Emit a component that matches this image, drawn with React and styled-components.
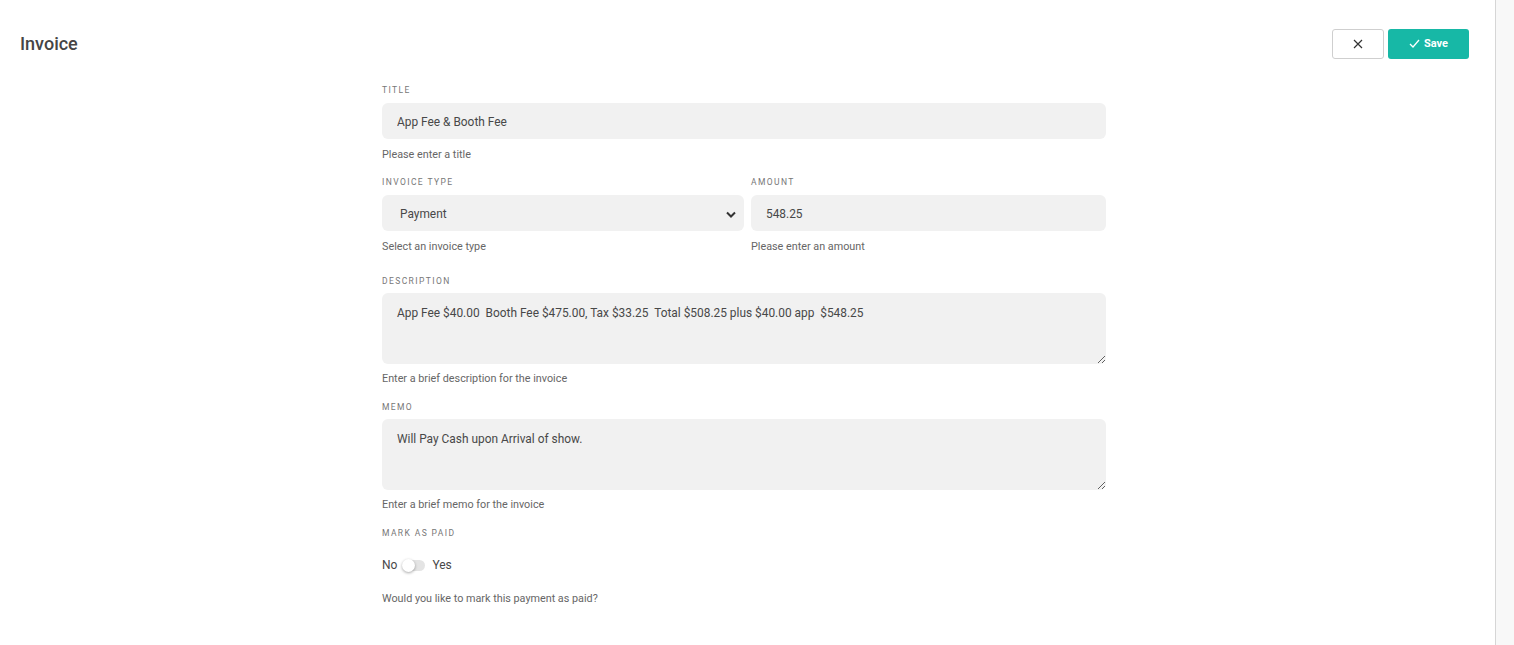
import React from "react";
import styled, { createGlobalStyle } from "styled-components";

const Global = createGlobalStyle`
  html, body {
    margin: 0;
    padding: 0;
    background: #fff;
    font-family: Roboto, "Liberation Sans", sans-serif;
  }
  * { box-sizing: border-box; }
`;

const Page = styled.div`
  display: flex;
  height: 645px;
  overflow: hidden;
`;

const Main = styled.main`
  flex: 1;
  padding: 29px 26px 0 20px;
`;

const Gutter = styled.aside`
  width: 19px;
  border-left: 1px solid #d6d6d6;
  background: #f8f8f8;
`;

const Header = styled.header`
  display: flex;
  align-items: center;
  justify-content: space-between;
`;

const Title = styled.h1`
  margin: -2px 0 0;
  font-size: 18px;
  font-weight: 500;
  color: #454545;
`;

const Actions = styled.div`
  display: flex;
  gap: 4px;
`;

const CloseButton = styled.button`
  width: 52px;
  height: 30px;
  display: flex;
  align-items: center;
  justify-content: center;
  background: #fff;
  border: 1px solid #cfcfcf;
  border-radius: 3px;
  padding: 0;
`;

const SaveButton = styled.button`
  width: 81px;
  height: 30px;
  display: flex;
  align-items: center;
  justify-content: center;
  gap: 4px;
  background: #17b8a6;
  border: none;
  border-radius: 3px;
  color: #fff;
  font-family: inherit;
  font-size: 11px;
  font-weight: 700;
  padding: 0 0 2px;
`;

const Form = styled.form`
  width: 724px;
  margin: 25px 0 0 362px;
`;

const Field = styled.div`
  margin-bottom: ${(p) => p.$gap || 14}px;
  flex: ${(p) => (p.$width ? `0 0 ${p.$width}px` : 1)};
`;

const Row = styled.div`
  display: flex;
  gap: 7px;
`;

const Label = styled.div`
  font-size: 8.5px;
  line-height: 12px;
  letter-spacing: 1.4px;
  color: #777;
  text-transform: uppercase;
  margin-bottom: ${(p) => p.$gap || 7}px;
`;

const boxStyles = `
  width: 100%;
  background: #f1f1f1;
  border: none;
  border-radius: 6px;
  font-family: Roboto, "Liberation Sans", sans-serif;
  font-size: 11.9px;
  color: #484848;
  outline: none;
`;

const Input = styled.input`
  ${boxStyles}
  height: 36px;
  padding: 2px 15px 0;
`;

const SelectBox = styled.div`
  ${boxStyles}
  height: 36px;
  padding: 2px 8px 0 18px;
  display: flex;
  align-items: center;
  justify-content: space-between;
`;

const TextArea = styled.textarea`
  ${boxStyles}
  height: 71px;
  padding: 13px 15px;
  resize: vertical;
  display: block;
`;

const Help = styled.div`
  font-size: 10.8px;
  line-height: 14px;
  color: #666;
  margin-top: ${(p) => p.$gap || 9}px;
`;

const ToggleRow = styled.div`
  display: flex;
  align-items: center;
  gap: 5px;
  height: 20px;
  margin-top: 16px;
  font-size: 12px;
  color: #484848;
`;

const Track = styled.span`
  position: relative;
  width: 22px;
  height: 11px;
  border-radius: 6px;
  background: #e4e4e4;
  margin: 0 2px 0 1px;
`;

const Knob = styled.span`
  position: absolute;
  left: -1px;
  top: -1px;
  width: 13px;
  height: 13px;
  border-radius: 50%;
  background: #fff;
  box-shadow: 0 1px 3px rgba(0, 0, 0, 0.35);
`;

export default function App() {
  return (
    <Page>
      <Global />
      <Main>
        <Header>
          <Title>Invoice</Title>
          <Actions>
            <CloseButton type="button" aria-label="Close">
              <svg width="10" height="10" viewBox="0 0 10 10">
                <path d="M1 1L9 9M9 1L1 9" stroke="#333" strokeWidth="1.2" />
              </svg>
            </CloseButton>
            <SaveButton type="button">
              <svg width="11" height="9" viewBox="0 0 11 9">
                <path d="M1 5L4 8L10 1" stroke="#fff" strokeWidth="1.3" fill="none" />
              </svg>
              Save
            </SaveButton>
          </Actions>
        </Header>

        <Form>
          <Field>
            <Label>Title</Label>
            <Input defaultValue="App Fee & Booth Fee" />
            <Help>Please enter a title</Help>
          </Field>

          <Row>
            <Field $gap={21} $width={362}>
              <Label>Invoice Type</Label>
              <SelectBox>
                Payment
                <svg width="10" height="7" viewBox="0 0 10 7">
                  <path d="M1 1.5L5 5.5L9 1.5" stroke="#333" strokeWidth="2" fill="none" />
                </svg>
              </SelectBox>
              <Help>Select an invoice type</Help>
            </Field>
            <Field $gap={21}>
              <Label>Amount</Label>
              <Input defaultValue="548.25" />
              <Help>Please enter an amount</Help>
            </Field>
          </Row>

          <Field $gap={15}>
            <Label $gap={6}>Description</Label>
            <TextArea defaultValue="App Fee $40.00  Booth Fee $475.00, Tax $33.25  Total $508.25 plus $40.00 app  $548.25" />
            <Help $gap={8}>Enter a brief description for the invoice</Help>
          </Field>

          <Field $gap={15}>
            <Label $gap={6}>Memo</Label>
            <TextArea defaultValue="Will Pay Cash upon Arrival of show." />
            <Help $gap={8}>Enter a brief memo for the invoice</Help>
          </Field>

          <Field>
            <Label>Mark as paid</Label>
            <ToggleRow>
              No
              <Track>
                <Knob />
              </Track>
              Yes
            </ToggleRow>
            <Help $gap={17}>Would you like to mark this payment as paid?</Help>
          </Field>
        </Form>
      </Main>
      <Gutter />
    </Page>
  );
}
